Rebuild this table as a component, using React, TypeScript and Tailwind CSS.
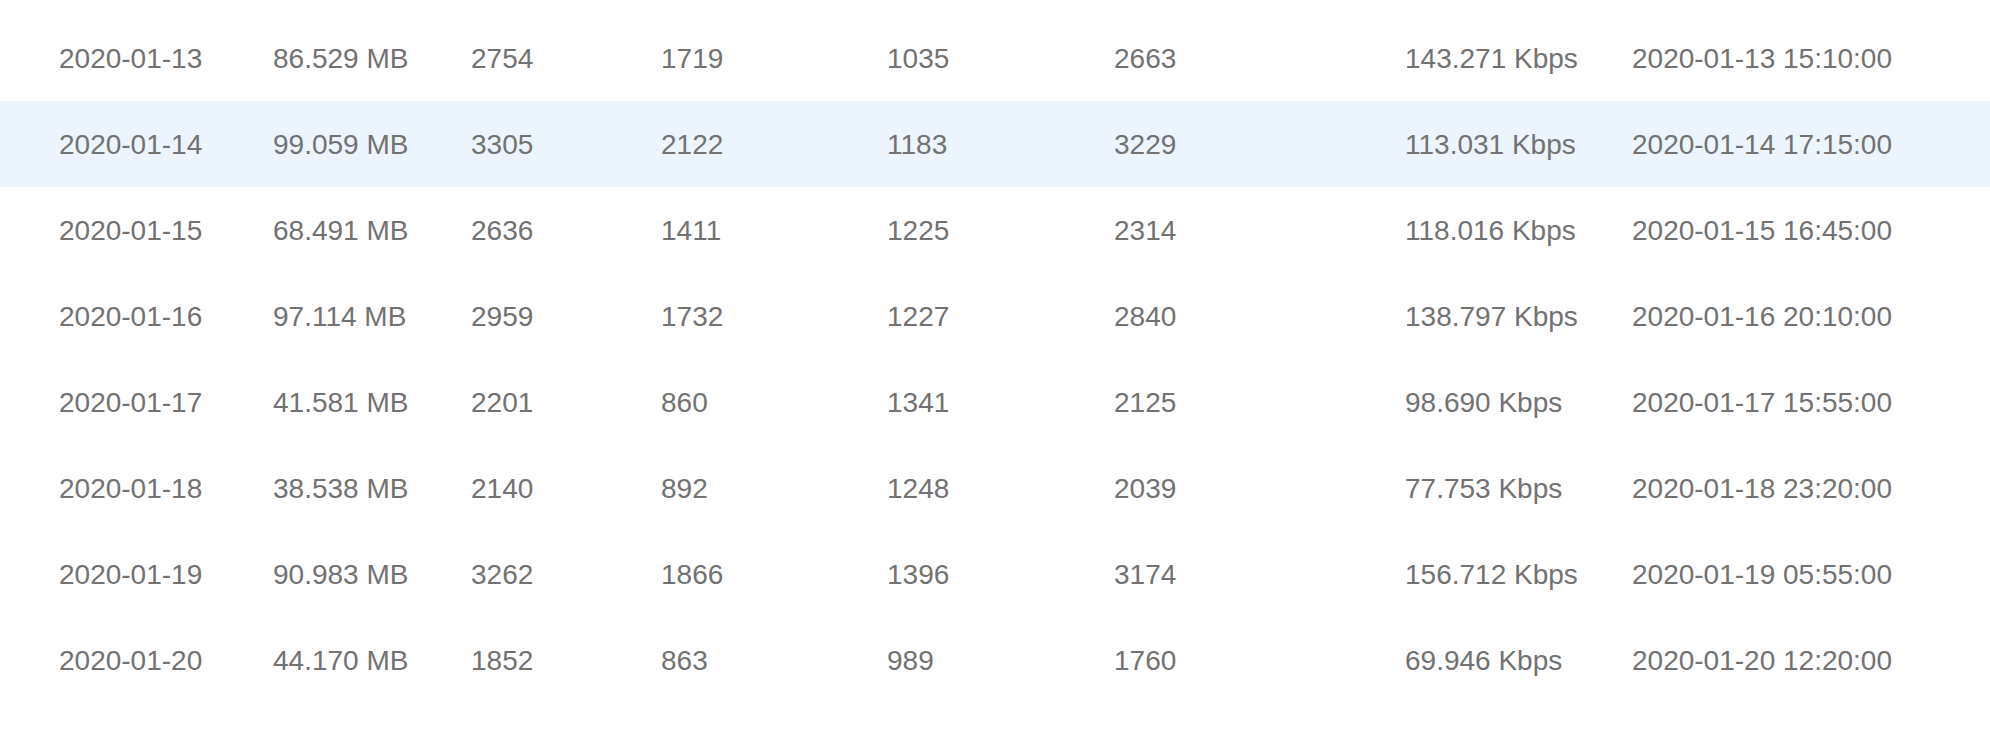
const rows = [
  ["2020-01-13", "86.529 MB", "2754", "1719", "1035", "2663", "143.271 Kbps", "2020-01-13 15:10:00"],
  ["2020-01-14", "99.059 MB", "3305", "2122", "1183", "3229", "113.031 Kbps", "2020-01-14 17:15:00"],
  ["2020-01-15", "68.491 MB", "2636", "1411", "1225", "2314", "118.016 Kbps", "2020-01-15 16:45:00"],
  ["2020-01-16", "97.114 MB", "2959", "1732", "1227", "2840", "138.797 Kbps", "2020-01-16 20:10:00"],
  ["2020-01-17", "41.581 MB", "2201", "860", "1341", "2125", "98.690 Kbps", "2020-01-17 15:55:00"],
  ["2020-01-18", "38.538 MB", "2140", "892", "1248", "2039", "77.753 Kbps", "2020-01-18 23:20:00"],
  ["2020-01-19", "90.983 MB", "3262", "1866", "1396", "3174", "156.712 Kbps", "2020-01-19 05:55:00"],
  ["2020-01-20", "44.170 MB", "1852", "863", "989", "1760", "69.946 Kbps", "2020-01-20 12:20:00"],
];

export default function App() {
  return (
    <div className="w-[1990px] h-[734px] bg-white pt-[15px] font-['Liberation_Sans',Arial,sans-serif] text-[28px] text-[#727272] overflow-hidden">
      {rows.map((r, i) => (
        <div
          key={r[0]}
          className={`grid grid-cols-[214px_198px_190px_226px_227px_291px_227px_1fr] items-center h-[86px] pl-[59px] ${i === 1 ? "bg-[#ecf5fd]" : ""}`}
        >
          {r.map((c, j) => (
            <div key={j} className="whitespace-nowrap pt-[2px]">{c}</div>
          ))}
        </div>
      ))}
    </div>
  );
}
